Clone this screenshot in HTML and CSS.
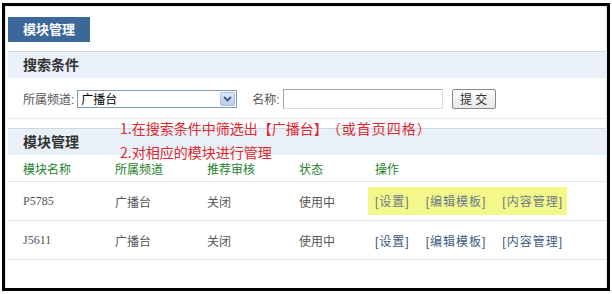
FILE: index.html
```html
<!DOCTYPE html>
<html lang="zh-CN">
<head>
  <meta charset="UTF-8">
  <title>模块管理</title>
  <link rel="stylesheet" href="styles.css">
</head>
<body>
  <div class="frame">
    <div class="panel">
      <div class="tabs">
        <span class="tab">模块管理</span>
      </div>

      <!-- 搜索条件 -->
      <div class="section-title">搜索条件</div>
      <form class="search">
        <label>所属频道:</label>
        <div class="select">
          <span class="select-text">广播台</span>
          <span class="select-btn">
            <svg width="9" height="6" viewBox="0 0 9 6"><path d="M1 1 L4.5 4.5 L8 1" fill="none" stroke="#3b5a8a" stroke-width="1.8"/></svg>
          </span>
        </div>
        <label class="name-label">名称:</label>
        <input type="text" class="name-input">
        <button type="button" class="submit">提 交</button>
      </form>

      <!-- 模块管理 -->
      <div class="section-title second">模块管理</div>
      <div class="grid head">
        <span>模块名称</span>
        <span>所属频道</span>
        <span>推荐审核</span>
        <span>状态</span>
        <span>操作</span>
      </div>
      <div class="grid row">
        <span class="code">P5785</span>
        <span>广播台</span>
        <span>关闭</span>
        <span>使用中</span>
        <span class="ops marked">
          <a>[设置]</a>
          <a>[编辑模板]</a>
          <a>[内容管理]</a>
        </span>
      </div>
      <div class="grid row">
        <span class="code">J5611</span>
        <span>广播台</span>
        <span>关闭</span>
        <span>使用中</span>
        <span class="ops">
          <a>[设置]</a>
          <a>[编辑模板]</a>
          <a>[内容管理]</a>
        </span>
      </div>
    </div>

    <!-- 标注 -->
    <div class="note">
      <p>1.在搜索条件中筛选出【广播台】<span class="paren">（或首页四格）</span></p>
      <p>2.对相应的模块进行管理</p>
    </div>
  </div>
</body>
</html>
```

FILE: styles.css
```css
* {
  box-sizing: border-box;
}
body {
  margin: 0;
  background: #fff;
  font-family: "Liberation Sans", "Noto Sans CJK SC", sans-serif;
  font-size: 12px;
  color: #555;
}

/* 外框 */
.frame {
  position: relative;
  margin: 3px 0 0 2px;
  width: 608px;
  height: 288px;
  border: 3px solid #000;
}
.panel {
  height: 100%;
  border-left: 1px solid #e4e4e4;
  border-right: 1px solid #e4e4e4;
  padding-left: 2px;
}

/* 标签 */
.tabs {
  padding-top: 10px;
  height: 45px;
  border-top: 1px solid #eef0f2;
}
.tab {
  display: inline-block;
  width: 82px;
  height: 25px;
  line-height: 25px;
  padding-left: 15px;
  background: #3c6899;
  color: #fff;
  font-weight: bold;
  font-size: 13px;
}

/* 区块标题 */
.section-title {
  height: 27px;
  line-height: 26px;
  padding-left: 15px;
  background: #e9f0f7;
  border-top: 1px solid #cdd8e3;
  font-size: 14px;
  font-weight: bold;
  color: #333;
}
.section-title.second {
  margin-top: 9px;
}

/* 搜索 */
.search {
  display: flex;
  align-items: center;
  height: 41px;
  padding: 1px 0 0 15px;
  border-bottom: 1px solid #f0e8e8;
}
.search label {
  color: #555;
}
.select {
  display: flex;
  align-items: center;
  width: 160px;
  height: 18px;
  margin-left: 3px;
  border: 1px solid #7f9db9;
  background: #fff;
  padding: 1px;
}
.select-text {
  flex: 1;
  padding-left: 2px;
  color: #000;
  font-size: 12px;
}
.select-btn {
  display: flex;
  align-items: center;
  justify-content: center;
  width: 15px;
  height: 14px;
  background: linear-gradient(#dce8f8, #b8cdee);
  border: 1px solid #a9bfe3;
  border-radius: 2px;
}
.name-label {
  margin-left: 15px;
}
.name-input {
  width: 160px;
  height: 20px;
  margin: 0 0 0 3px;
  border: 1px solid #a5a5a5;
  border-right-color: #ddd;
  border-bottom-color: #ddd;
}
.submit {
  width: 44px;
  height: 20px;
  margin-left: 9px;
  padding: 0;
  border: 1px solid #8a8a8a;
  border-radius: 2px;
  background: linear-gradient(#fdfdfd, #e8e8e8);
  font-family: inherit;
  font-size: 12px;
  color: #333;
}

/* 表格 */
.grid {
  display: grid;
  grid-template-columns: 92px 92px 92px 76px 1fr;
  align-items: center;
  padding-left: 15px;
  border-bottom: 1px solid #e1e5ea;
}
.grid.head {
  height: 27px;
  color: #25812a;
}
.grid.row {
  height: 39px;
}
.code {
  font-family: "Liberation Serif", serif;
  font-size: 12px;
}
.ops {
  display: flex;
  gap: 16px;
  justify-self: start;
  letter-spacing: 1px;
  color: #3c5a80;
}
.ops.marked {
  margin-left: -7px;
  padding: 5px 4px 6px 7px;
  background: #f4f78a;
  color: #6b7a8c;
}

/* 红色标注 */
.note {
  position: absolute;
  left: 115px;
  top: 110px;
  color: #e0282e;
  font-size: 14px;
  font-family: "Noto Sans CJK SC", sans-serif;
}
.note p {
  margin: 0;
  line-height: 24px;
}
.note .paren {
  margin-left: 6px;
  letter-spacing: 1px;
}
```
